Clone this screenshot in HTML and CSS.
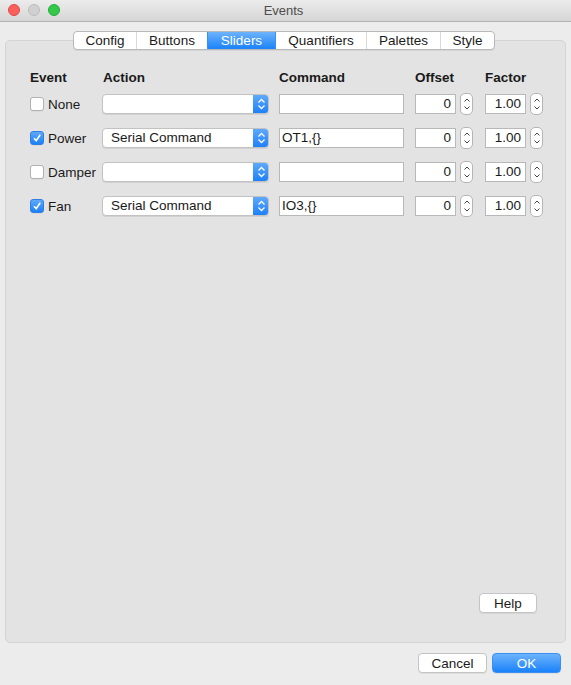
FILE: index.html
```html
<!DOCTYPE html>
<html>
<head>
<meta charset="utf-8">
<link rel="stylesheet" href="styles.css">
</head>
<body>
<div class="window">
  <div class="titlebar">
    <div class="lights">
      <span class="light red"></span>
      <span class="light gray"></span>
      <span class="light green"></span>
    </div>
    <div class="title">Events</div>
  </div>

  <div class="tabs">
    <div class="tab w-config">Config</div>
    <div class="tab w-buttons">Buttons</div>
    <div class="tab w-sliders active">Sliders</div>
    <div class="tab w-quant">Quantifiers</div>
    <div class="tab w-pal">Palettes</div>
    <div class="tab w-style">Style</div>
  </div>

  <div class="panel">
    <div class="grid">
      <div class="row head">
        <div class="c-event">Event</div>
        <div class="c-action">Action</div>
        <div class="c-command">Command</div>
        <div class="c-offset">Offset</div>
        <div class="c-factor">Factor</div>
      </div>

      <div class="row">
        <label class="c-event"><span class="cb"></span>None</label>
        <div class="c-action"><div class="select"><span class="sel-text"></span><span class="sel-arrow"><svg width="9" height="12" viewBox="0 0 9 12"><path d="M1.5 4.5 L4.5 1.5 L7.5 4.5 M1.5 7.5 L4.5 10.5 L7.5 7.5" fill="none" stroke="#fff" stroke-width="1.3"/></svg></span></div></div>
        <div class="c-command"><div class="input"></div></div>
        <div class="c-offset"><div class="num off">0</div><div class="stepper"><svg width="8" height="16" viewBox="0 0 8 16"><path d="M1.5 5.5 L4 3 L6.5 5.5 M1.5 10.5 L4 13 L6.5 10.5" fill="none" stroke="#444" stroke-width="1"/></svg></div></div>
        <div class="c-factor"><div class="num fac">1.00</div><div class="stepper"><svg width="8" height="16" viewBox="0 0 8 16"><path d="M1.5 5.5 L4 3 L6.5 5.5 M1.5 10.5 L4 13 L6.5 10.5" fill="none" stroke="#444" stroke-width="1"/></svg></div></div>
      </div>

      <div class="row">
        <label class="c-event"><span class="cb on"><svg width="10" height="10" viewBox="0 0 10 10"><path d="M2 5.2 L4.2 7.6 L8.2 1.8" fill="none" stroke="#fff" stroke-width="1.6"/></svg></span>Power</label>
        <div class="c-action"><div class="select"><span class="sel-text">Serial Command</span><span class="sel-arrow"><svg width="9" height="12" viewBox="0 0 9 12"><path d="M1.5 4.5 L4.5 1.5 L7.5 4.5 M1.5 7.5 L4.5 10.5 L7.5 7.5" fill="none" stroke="#fff" stroke-width="1.3"/></svg></span></div></div>
        <div class="c-command"><div class="input">OT1,{}</div></div>
        <div class="c-offset"><div class="num off">0</div><div class="stepper"><svg width="8" height="16" viewBox="0 0 8 16"><path d="M1.5 5.5 L4 3 L6.5 5.5 M1.5 10.5 L4 13 L6.5 10.5" fill="none" stroke="#444" stroke-width="1"/></svg></div></div>
        <div class="c-factor"><div class="num fac">1.00</div><div class="stepper"><svg width="8" height="16" viewBox="0 0 8 16"><path d="M1.5 5.5 L4 3 L6.5 5.5 M1.5 10.5 L4 13 L6.5 10.5" fill="none" stroke="#444" stroke-width="1"/></svg></div></div>
      </div>

      <div class="row">
        <label class="c-event"><span class="cb"></span>Damper</label>
        <div class="c-action"><div class="select"><span class="sel-text"></span><span class="sel-arrow"><svg width="9" height="12" viewBox="0 0 9 12"><path d="M1.5 4.5 L4.5 1.5 L7.5 4.5 M1.5 7.5 L4.5 10.5 L7.5 7.5" fill="none" stroke="#fff" stroke-width="1.3"/></svg></span></div></div>
        <div class="c-command"><div class="input"></div></div>
        <div class="c-offset"><div class="num off">0</div><div class="stepper"><svg width="8" height="16" viewBox="0 0 8 16"><path d="M1.5 5.5 L4 3 L6.5 5.5 M1.5 10.5 L4 13 L6.5 10.5" fill="none" stroke="#444" stroke-width="1"/></svg></div></div>
        <div class="c-factor"><div class="num fac">1.00</div><div class="stepper"><svg width="8" height="16" viewBox="0 0 8 16"><path d="M1.5 5.5 L4 3 L6.5 5.5 M1.5 10.5 L4 13 L6.5 10.5" fill="none" stroke="#444" stroke-width="1"/></svg></div></div>
      </div>

      <div class="row">
        <label class="c-event"><span class="cb on"><svg width="10" height="10" viewBox="0 0 10 10"><path d="M2 5.2 L4.2 7.6 L8.2 1.8" fill="none" stroke="#fff" stroke-width="1.6"/></svg></span>Fan</label>
        <div class="c-action"><div class="select"><span class="sel-text">Serial Command</span><span class="sel-arrow"><svg width="9" height="12" viewBox="0 0 9 12"><path d="M1.5 4.5 L4.5 1.5 L7.5 4.5 M1.5 7.5 L4.5 10.5 L7.5 7.5" fill="none" stroke="#fff" stroke-width="1.3"/></svg></span></div></div>
        <div class="c-command"><div class="input">IO3,{}</div></div>
        <div class="c-offset"><div class="num off">0</div><div class="stepper"><svg width="8" height="16" viewBox="0 0 8 16"><path d="M1.5 5.5 L4 3 L6.5 5.5 M1.5 10.5 L4 13 L6.5 10.5" fill="none" stroke="#444" stroke-width="1"/></svg></div></div>
        <div class="c-factor"><div class="num fac">1.00</div><div class="stepper"><svg width="8" height="16" viewBox="0 0 8 16"><path d="M1.5 5.5 L4 3 L6.5 5.5 M1.5 10.5 L4 13 L6.5 10.5" fill="none" stroke="#444" stroke-width="1"/></svg></div></div>
      </div>
    </div>

    <div class="help-row">
      <div class="btn help">Help</div>
    </div>
  </div>

  <div class="footer">
    <div class="btn cancel">Cancel</div>
    <div class="btn ok">OK</div>
  </div>
</div>
</body>
</html>
```
FILE: styles.css
```css
html, body {
  margin: 0;
  padding: 0;
}
body {
  font-family: "Liberation Sans", Arial, sans-serif;
  font-size: 13.5px;
  color: #1a1a1a;
  background: #ececec;
}
.window {
  width: 571px;
  height: 685px;
  display: flex;
  flex-direction: column;
  background: #ececec;
  overflow: hidden;
}
.titlebar {
  height: 22px;
  box-sizing: border-box;
  border-bottom: 1px solid #b3b3b3;
  background: linear-gradient(#ececec, #d6d6d6);
  display: flex;
  align-items: center;
}
.lights {
  display: flex;
  gap: 8px;
  padding-left: 8px;
  margin-top: -1px;
}
.light {
  width: 12px;
  height: 12px;
  border-radius: 50%;
  box-sizing: border-box;
}
.light.red { background: #fc605c; border: 1px solid #de4a46; }
.light.gray { background: #d0d0d0; border: 1px solid #bcbcbc; }
.light.green { background: #34c84a; border: 1px solid #27aa38; }
.title {
  flex: 1;
  text-align: center;
  color: #4d4d4d;
  font-size: 13px;
  margin-left: -64px;
  margin-top: -1px;
}
.tabs {
  margin-top: 9px;
  align-self: center;
  display: flex;
  height: 19px;
  box-sizing: border-box;
  border: 1px solid #b9b9b9;
  border-radius: 4px;
  background: #fff;
  position: relative;
  z-index: 1;
  overflow: hidden;
  margin-left: -3px;
  box-shadow: 0 1px 0 rgba(0,0,0,0.06);
}
.tab {
  display: flex;
  align-items: center;
  justify-content: center;
  border-left: 1px solid #d9d9d9;
  box-sizing: border-box;
  color: #1a1a1a;
  line-height: 17px;
  flex-shrink: 0;
}
.tab:first-child { border-left: none; }
.tab.active {
  background: linear-gradient(#6cb3fa, #1a82fb);
  color: #fff;
  border-left-color: #3a8ff5;
}
.tab.active + .tab { border-left-color: #3a8ff5; }
.w-config { width: 62px; }
.w-buttons { width: 71px; }
.w-sliders { width: 68px; }
.w-quant { width: 91px; }
.w-pal { width: 74px; }
.w-style { width: 54px; }
.panel {
  margin: -10px 5px 0 5px;
  height: 603px;
  box-sizing: border-box;
  border: 1px solid #d4d4d4;
  border-radius: 5px;
  background: #e3e3e3;
  display: flex;
  flex-direction: column;
  padding: 26px 28px 29px 24px;
}
.grid {
  display: flex;
  flex-direction: column;
  gap: 14px;
}
.row {
  display: flex;
  align-items: center;
  height: 20px;
}
.row > * { flex-shrink: 0; }
.row.head {
  font-weight: bold;
  margin-bottom: -7px;
}
.row.head .c-action { padding-left: 1px; }
.c-event {
  width: 72px;
  display: flex;
  align-items: center;
}
.c-action { width: 177px; box-sizing: border-box; }
.c-command { width: 136px; }
.c-offset { width: 70px; display: flex; align-items: center; }
.c-factor { width: 60px; display: flex; align-items: center; }
.cb {
  width: 14px;
  height: 14px;
  box-sizing: border-box;
  border: 1px solid #b1b1b1;
  border-radius: 3px;
  background: #fff;
  margin-right: 4px;
  display: flex;
  align-items: center;
  justify-content: center;
  box-shadow: 0 0.5px 0.5px rgba(0,0,0,0.08);
}
.cb.on {
  background: linear-gradient(#5fa9fa, #1c80f8);
  border-color: #2d7fe4;
}
.select {
  width: 167px;
  height: 20px;
  box-sizing: border-box;
  border: 1px solid #c2c2c2;
  border-radius: 4px;
  background: #fff;
  display: flex;
  align-items: stretch;
  overflow: hidden;
  box-shadow: 0 1px 0 rgba(0,0,0,0.08);
}
.sel-text {
  flex: 1;
  padding-left: 8px;
  line-height: 18px;
}
.sel-arrow {
  width: 16px;
  background: linear-gradient(#62abfb, #1a7ef8);
  display: flex;
  align-items: center;
  justify-content: center;
  margin: -1px -1px -1px 0;
}
.input {
  width: 125px;
  height: 20px;
  box-sizing: border-box;
  border: 1px solid #b8b8b8;
  background: #fff;
  padding-left: 2px;
  line-height: 18px;
}
.num {
  height: 20px;
  box-sizing: border-box;
  border: 1px solid #b8b8b8;
  background: #fff;
  text-align: right;
  padding-right: 4px;
  line-height: 18px;
}
.num.off { width: 41px; }
.num.fac { width: 41px; }
.stepper {
  width: 13px;
  height: 22px;
  box-sizing: border-box;
  border: 1px solid #b5b5b5;
  border-radius: 5px;
  background: #fff;
  margin-left: 4px;
  display: flex;
  align-items: center;
  justify-content: center;
}
.help-row {
  margin-top: auto;
  display: flex;
  justify-content: flex-end;
}
.btn {
  height: 20px;
  box-sizing: border-box;
  border: 1px solid #c4c4c4;
  border-radius: 4px;
  background: #fff;
  display: flex;
  align-items: center;
  justify-content: center;
  box-shadow: 0 1px 0 rgba(0,0,0,0.06);
}
.help { width: 58px; }
.footer {
  display: flex;
  justify-content: flex-end;
  gap: 5px;
  padding: 10px 10px 0 0;
}
.cancel { width: 69px; }
.ok {
  width: 69px;
  background: linear-gradient(#6cb3fa, #1a82fb);
  border-color: #3a8ff5;
  color: #fff;
}
```
